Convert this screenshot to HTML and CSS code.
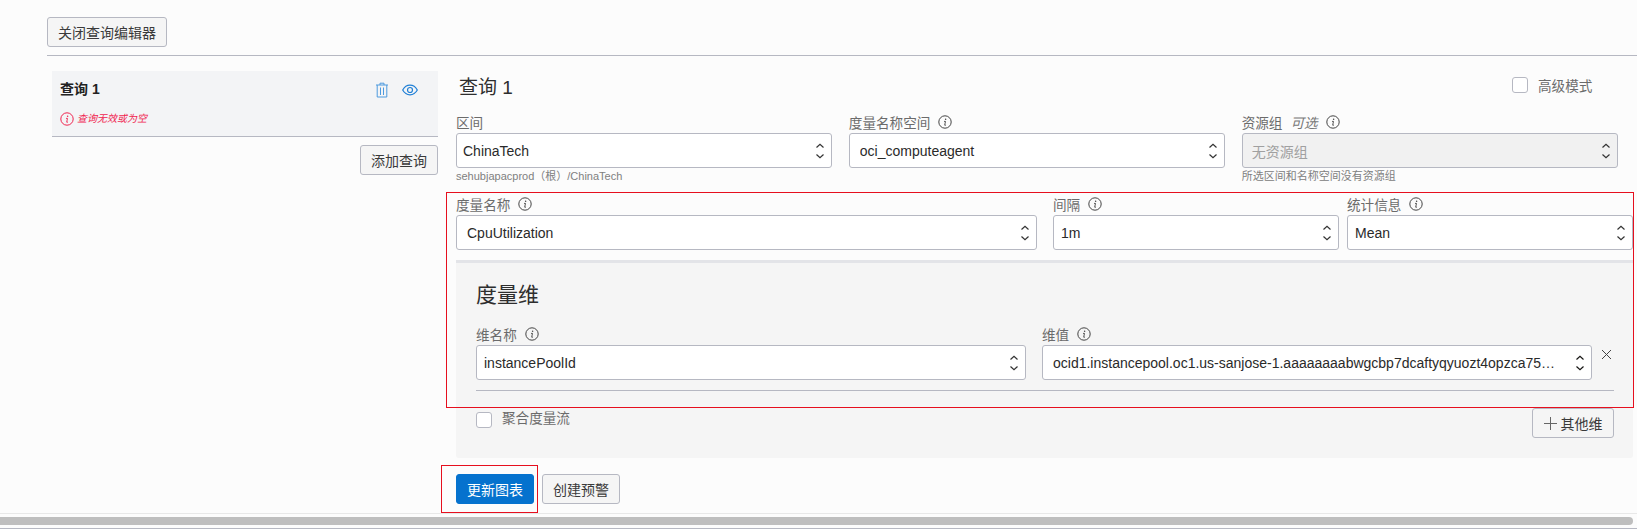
FILE: index.html
```html
<!DOCTYPE html>
<html lang="zh">
<head>
<meta charset="utf-8">
<title>查询编辑器</title>
<link rel="stylesheet" href="styles.css">
</head>
<body>
<svg class="defs" width="0" height="0" aria-hidden="true">
  <symbol id="info" viewBox="0 0 14 14">
    <circle cx="7" cy="7" r="6.2" fill="none" stroke="currentColor" stroke-width="1"/>
    <circle cx="7.6" cy="4.2" r=".75" fill="currentColor"/>
    <path d="M6 6.4h1.5L6.7 10c-.1.4.3.5 1.3-.1" fill="none" stroke="currentColor" stroke-width=".9"/>
  </symbol>
  <symbol id="updown" viewBox="0 0 10 16">
    <path d="M1.500 4.500 5 1.200 8.500 4.500M1.500 11.500 5 14.800 8.500 11.500" fill="none" stroke="currentColor" stroke-width="1.200"/>
  </symbol>
</svg>
<div class="page">
  <div class="toolbar"><button class="btn">关闭查询编辑器</button></div>
  <div class="rule"></div>
  <div class="editor">
    <aside class="sidebar">
      <div class="card">
        <div class="card-head">
          <strong class="card-title">查询 1</strong>
          <svg class="trash" width="14" height="16" viewBox="0 0 14 16"><path d="M1 3h12M5 3V1.200h4V3M2.200 3v12h9.600V3M5.500 5.500v7.500M8.500 5.500v7.500" fill="none" stroke="currentColor" stroke-width="1"/></svg>
          <svg class="eye" width="16" height="12" viewBox="0 0 16 12"><path d="M.7 6C2.500 2.700 5 1.200 8 1.200S13.500 2.700 15.300 6C13.500 9.300 11 10.800 8 10.800S2.500 9.300.7 6Z" fill="none" stroke="currentColor" stroke-width="1.200"/><circle cx="8" cy="6" r="2.500" fill="none" stroke="currentColor" stroke-width="1.200"/></svg>
        </div>
        <div class="card-error"><svg class="err-icon" width="14" height="14"><use href="#info"/></svg><em>查询无效或为空</em></div>
      </div>
      <div class="add-row"><button class="btn">添加查询</button></div>
    </aside>
    <main class="main">
      <header class="head">
        <h2 class="title">查询 1</h2>
        <label class="check"><span class="box"></span>高级模式</label>
      </header>
      <div class="grid-three">
        <div class="field">
          <div class="label">区间</div>
          <div class="select pad-6"><span class="value">ChinaTech</span><svg class="arrows" width="10" height="16"><use href="#updown"/></svg></div>
          <div class="help">sehubjapacprod（根）/ChinaTech</div>
        </div>
        <div class="field">
          <div class="label">度量名称空间<svg class="i" width="14" height="14"><use href="#info"/></svg></div>
          <div class="select pad-10"><span class="value">oci_computeagent</span><svg class="arrows" width="10" height="16"><use href="#updown"/></svg></div>
        </div>
        <div class="field">
          <div class="label">资源组<em class="opt">可选</em><svg class="i" width="14" height="14"><use href="#info"/></svg></div>
          <div class="select disabled pad-9"><span class="value">无资源组</span><svg class="arrows" width="10" height="16"><use href="#updown"/></svg></div>
          <div class="help">所选区间和名称空间没有资源组</div>
        </div>
      </div>
      <div class="metric-row">
        <div class="field wide">
          <div class="label">度量名称<svg class="i" width="14" height="14"><use href="#info"/></svg></div>
          <div class="select pad-10"><span class="value">CpuUtilization</span><svg class="arrows" width="10" height="16"><use href="#updown"/></svg></div>
        </div>
        <div class="field narrow">
          <div class="label">间隔<svg class="i" width="14" height="14"><use href="#info"/></svg></div>
          <div class="select pad-7"><span class="value">1m</span><svg class="arrows" width="10" height="16"><use href="#updown"/></svg></div>
        </div>
        <div class="field stat">
          <div class="label">统计信息<svg class="i" width="14" height="14"><use href="#info"/></svg></div>
          <div class="select pad-7"><span class="value">Mean</span><svg class="arrows" width="10" height="16"><use href="#updown"/></svg></div>
        </div>
      </div>
      <section class="panel">
        <h3 class="panel-title">度量维</h3>
        <div class="dim-row">
          <div class="dim-fields">
            <div class="field">
              <div class="label">维名称<svg class="i" width="14" height="14"><use href="#info"/></svg></div>
              <div class="select pad-7"><span class="value">instancePoolId</span><svg class="arrows" width="10" height="16"><use href="#updown"/></svg></div>
            </div>
            <div class="field">
              <div class="label">维值<svg class="i" width="14" height="14"><use href="#info"/></svg></div>
              <div class="select pad-10"><span class="value">ocid1.instancepool.oc1.us-sanjose-1.aaaaaaaabwgcbp7dcaftyqyuozt4opzca75…</span><svg class="arrows dark" width="10" height="16"><use href="#updown"/></svg></div>
            </div>
          </div>
          <div class="remove"><svg width="11" height="11" viewBox="0 0 11 11"><path d="M1 1l9 9M10 1l-9 9" fill="none" stroke="currentColor" stroke-width="1"/></svg></div>
        </div>
        <div class="panel-rule"></div>
        <div class="panel-foot">
          <label class="check agg"><span class="box"></span>聚合度量流</label>
          <button class="btn btn-more"><svg class="plus" width="13" height="13" viewBox="0 0 13 13"><path d="M6.500 0v13M0 6.500h13" fill="none" stroke="currentColor" stroke-width="1"/></svg>其他维</button>
        </div>
      </section>
      <div class="actions">
        <button class="btn primary">更新图表</button>
        <button class="btn">创建预警</button>
      </div>
    </main>
  </div>
  <footer class="scroll"><div class="scroll-track"><div class="scroll-thumb"></div></div></footer>
  <div class="mark mark-form"></div>
  <div class="mark mark-button"></div>
</div>
</body>
</html>
```
FILE: styles.css
```css
* { box-sizing: border-box; }
html, body { margin: 0; padding: 0; }
body {
  background: #fcfcfc;
  color: #161513;
  font-family: "Liberation Sans", "Noto Sans CJK SC", sans-serif;
  font-size: 14px;
}
.defs { position: absolute; }
.page {
  position: relative;
  display: flex;
  flex-direction: column;
  height: 529px;
  overflow: hidden;
}
.toolbar { padding: 17px 0 0 47px; }
.btn {
  display: inline-flex;
  align-items: center;
  justify-content: center;
  height: 30px;
  padding: 0 10px;
  background: #f5f5f5;
  border: 1px solid #b6b8c2;
  border-radius: 3px;
  color: #3a3a3a;
  font: inherit;
  white-space: nowrap;
}
.btn.primary {
  width: 78px;
  background: #0572ce;
  border-color: #0572ce;
  color: #fff;
}
.btn-more { width: 82px; padding: 0; }
.rule {
  height: 1px;
  margin: 8px 0 0 47px;
  background: #b6b8c2;
}
.editor {
  display: flex;
  gap: 18px;
  margin-top: 15px;
  padding-left: 52px;
}
.sidebar { flex: none; width: 386px; }
.card {
  height: 66px;
  padding: 0 8px;
  background: #f3f4f6;
  border-bottom: 1px solid #b6b8c2;
}
.card-head {
  display: flex;
  align-items: center;
  height: 36px;
}
.card-title { flex: 1; font-size: 14px; color: #222; line-height: 36px; }
.trash { color: #4d9ade; margin-right: 13px; margin-top: 2px; }
.eye { color: #1f7fd6; margin-right: 12px; margin-top: 2px; }
.card-error {
  display: flex;
  align-items: center;
  gap: 3px;
  margin-top: 5px;
  color: #f0244f;
  font-size: 10px;
  line-height: 14px;
}
.add-row { display: flex; justify-content: flex-end; margin-top: 8px; }
.main { flex: none; width: 1177px; }
.head {
  display: flex;
  justify-content: space-between;
  height: 42px;
  padding: 5px 32px 0 3px;
}
.title { margin: 0; font-size: 19px; font-weight: 400; line-height: 24px; color: #2e2e2e; }
.check {
  display: flex;
  align-items: center;
  gap: 10px;
  height: 20px;
  color: #6b6b6b;
  font-size: 13.6px;
}
.head .check { margin-top: -1px; width: 89px; }
.box {
  flex: none;
  width: 16px;
  height: 16px;
  background: #fff;
  border: 1px solid #b6b8c2;
  border-radius: 3px;
}
.grid-three {
  display: grid;
  grid-template-columns: repeat(3, 1fr);
  column-gap: 16.500px;
  padding-right: 15px;
  height: 82px;
}
.label {
  display: flex;
  align-items: center;
  height: 20px;
  margin: -1px 0 1px;
  color: #6b6b6b;
  font-size: 13.6px;
  white-space: nowrap;
}
.i { flex: none; margin-left: 8px; color: #444; }
.opt { margin-left: 8px; color: #777; font-size: 13.6px; }
.select {
  display: flex;
  align-items: center;
  height: 35px;
  padding-right: 6px;
  background: #fff;
  border: 1px solid #b6b8c2;
  border-radius: 3px;
}
.pad-6 { padding-left: 6px; }
.pad-7 { padding-left: 7px; }
.pad-9 { padding-left: 9px; }
.pad-10 { padding-left: 10px; }
.value {
  flex: 1;
  min-width: 0;
  color: #2a2a2a;
  white-space: nowrap;
  overflow: hidden;
}
.arrows { flex: none; color: #333; }
.arrows.dark { color: #161513; }
.select.disabled { background: #f1f1f1; }
.select.disabled .value { color: #a0a0a0; }
.help {
  margin-top: 2px;
  color: #808080;
  font-size: 11px;
  line-height: 13px;
  white-space: nowrap;
}
.metric-row { display: flex; }
.wide { flex: none; width: 581px; margin-right: 16px; }
.narrow { flex: none; width: 286px; margin-right: 8px; }
.stat { flex: none; width: 286px; }
.panel {
  height: 198px;
  margin-top: 10px;
  padding: 17px 19px 0 20px;
  background: #f5f5f5;
  border-top: 3px solid #e3e4e8;
  border-radius: 0 0 3px 3px;
}
.panel-title {
  margin: 0 0 15px;
  font-size: 21px;
  font-weight: 400;
  line-height: 30px;
  color: #2e2e2e;
}
.dim-row { display: flex; }
.dim-fields {
  flex: 1;
  display: grid;
  grid-template-columns: 1fr 1fr;
  column-gap: 16px;
}
.remove {
  flex: none;
  width: 22px;
  padding: 24px 0 0 9px;
  color: #444;
}
.remove svg { display: block; }
.panel-rule { height: 1px; margin-top: 10px; background: #b6b8c2; }
.panel-foot {
  display: flex;
  justify-content: space-between;
  align-items: flex-start;
  margin-top: 17px;
}
.agg { margin-top: 4px; align-items: flex-start; line-height: 13px; }
.plus { margin-right: 4px; color: #666; }
.actions { display: flex; gap: 8px; margin-top: 16px; }
.actions .btn { width: 78px; padding: 0; }
.scroll {
  position: absolute;
  left: 0;
  right: 0;
  top: 513px;
  height: 16px;
  border-top: 1px solid #e8e8e8;
}
.scroll-track {
  height: 15px;
  padding-top: 3px;
  border-bottom: 1px solid #b6b8c2;
}
.scroll-thumb {
  width: 1633px;
  height: 8px;
  background: #bebebe;
  border-radius: 0 4px 4px 0;
}
.mark {
  position: absolute;
  border: 1px solid #e60f1e;
  pointer-events: none;
}
.mark-form { left: 446px; top: 192px; width: 1188px; height: 216px; }
.mark-button { left: 441px; top: 465px; width: 97px; height: 48px; }
```
